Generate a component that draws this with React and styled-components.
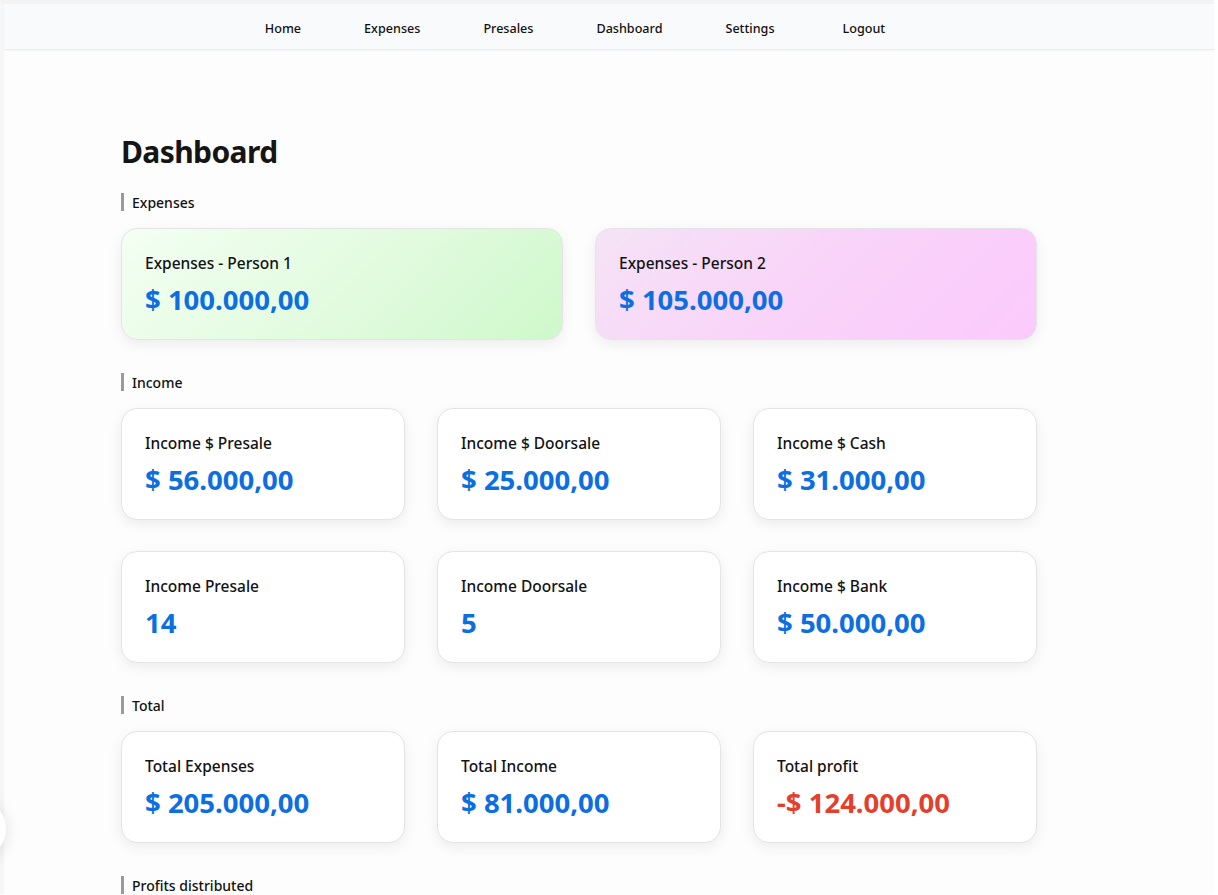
import React from "react";
import styled, { createGlobalStyle } from "styled-components";

const Global = createGlobalStyle`
  html, body { margin: 0; padding: 0; background: #ffffff; }
  body { font-family: "Noto Sans", "Open Sans", Arial, sans-serif; color: #111; overflow: hidden; }
  * { box-sizing: border-box; }
`;

const Frame = styled.div`
  border-top: 4px solid #f3f3f3;
  border-left: 4px solid #f6f6f6;
  margin-right: 4px;
  background: #fdfdfd;
  min-height: 891px;
`;

const Nav = styled.nav`
  height: 46px;
  background: #f9fafb;
  border-bottom: 1px solid #ededed;
  box-shadow: 0 1px 2px rgba(0, 0, 0, 0.03);
  display: flex;
  align-items: center;
  justify-content: center;
  padding: 3px 68px 0 0;
  gap: 63px;
`;

const NavLink = styled.a`
  font-size: 12.6px;
  font-weight: 500;
  color: #111;
  text-decoration: none;
  margin-left: ${(p) => (p.$extra ? "5px" : "0")};
`;

const Main = styled.main`
  padding: 83px 0 0 117px;
`;

const Title = styled.h1`
  margin: 0 0 22px;
  font-size: 30px;
  line-height: 38px;
  letter-spacing: -0.6px;
  font-weight: 700;
  color: #151515;
`;

const Section = styled.section`
  margin-bottom: 33px;
`;

const SectionLabel = styled.h2`
  margin: 0 0 17px;
  height: 18px;
  display: flex;
  align-items: center;
  border-left: 3px solid #9a9a9a;
  padding-left: 8px;
  font-size: 14px;
  font-weight: 500;
  color: #111;
`;

const Grid = styled.div`
  display: grid;
  width: 916px;
  grid-template-columns: repeat(${(p) => p.$cols}, 1fr);
  column-gap: 32px;
  row-gap: 31px;
`;

const backgrounds = {
  green: "linear-gradient(135deg, #f3fff2 0%, #e3fbe0 50%, #cff8cb 100%)",
  pink: "linear-gradient(135deg, #f5e3f6 0%, #f9d3f9 50%, #fbcafc 100%)",
  plain: "#ffffff",
};

const Card = styled.div`
  height: 112px;
  border-radius: 16px;
  border: 1px solid #e4e4e6;
  background: ${(p) => backgrounds[p.$tone || "plain"]};
  box-shadow: 0 4px 14px rgba(0, 0, 0, 0.07);
  padding: 23px 23px;
  display: flex;
  flex-direction: column;
  gap: 10px;
`;

const CardLabel = styled.div`
  font-size: 15.5px;
  line-height: 22px;
  font-weight: 500;
  color: #121212;
`;

const CardValue = styled.div`
  font-size: 27.5px;
  line-height: 32px;
  font-weight: 700;
  color: ${(p) => (p.$negative ? "#e43f2c" : "#0b6ee1")};
`;

const SideBubble = styled.div`
  position: fixed;
  left: -56px;
  top: 798px;
  width: 62px;
  height: 62px;
  border-radius: 50%;
  background: #fff;
  box-shadow: 0 2px 16px rgba(0, 0, 0, 0.12);
`;

const nav = ["Home", "Expenses", "Presales", "Dashboard", "Settings", "Logout"];

const sections = [
  {
    title: "Expenses",
    cols: 2,
    cards: [
      { label: "Expenses - Person 1", value: "$ 100.000,00", tone: "green" },
      { label: "Expenses - Person 2", value: "$ 105.000,00", tone: "pink" },
    ],
  },
  {
    title: "Income",
    cols: 3,
    cards: [
      { label: "Income $ Presale", value: "$ 56.000,00" },
      { label: "Income $ Doorsale", value: "$ 25.000,00" },
      { label: "Income $ Cash", value: "$ 31.000,00" },
      { label: "Income Presale", value: "14" },
      { label: "Income Doorsale", value: "5" },
      { label: "Income $ Bank", value: "$ 50.000,00" },
    ],
  },
  {
    title: "Total",
    cols: 3,
    cards: [
      { label: "Total Expenses", value: "$ 205.000,00" },
      { label: "Total Income", value: "$ 81.000,00" },
      { label: "Total profit", value: "-$ 124.000,00", negative: true },
    ],
  },
];

export default function App() {
  return (
    <>
      <Global />
      <Frame>
        <Nav>
          {nav.map((n) => (
            <NavLink key={n} href="#" $extra={n === "Logout"}>
              {n}
            </NavLink>
          ))}
        </Nav>
        <Main>
          <Title>Dashboard</Title>
          {sections.map((s) => (
            <Section key={s.title}>
              <SectionLabel>{s.title}</SectionLabel>
              <Grid $cols={s.cols}>
                {s.cards.map((c) => (
                  <Card key={c.label} $tone={c.tone}>
                    <CardLabel>{c.label}</CardLabel>
                    <CardValue $negative={c.negative}>{c.value}</CardValue>
                  </Card>
                ))}
              </Grid>
            </Section>
          ))}
          <Section>
            <SectionLabel>Profits distributed</SectionLabel>
          </Section>
        </Main>
        <SideBubble />
      </Frame>
    </>
  );
}
